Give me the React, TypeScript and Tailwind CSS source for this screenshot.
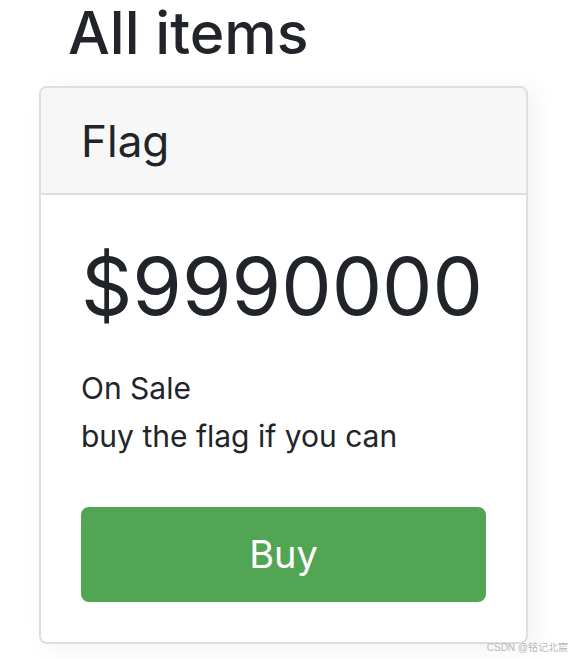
export default function App() {
  return (
    <div className="relative w-[572px] h-[658px] bg-white text-[#212529] font-['Inter','Liberation_Sans',sans-serif]">
      <h1 className="pl-[68px] pt-[1px] text-[59px] leading-[64px] font-medium">All items</h1>
      <div className="ml-[39px] mt-[21px] w-[489px] rounded-[8px] border-2 border-[#dedede] bg-white shadow-[8px_4px_24px_rgba(0,0,0,0.06)] overflow-hidden">
        <div className="h-[107px] bg-[#f7f7f7] border-b-2 border-[#dedede] px-[40px] flex items-center text-[44px]">
          Flag
        </div>
        <div className="px-[40px] pt-[43px] pb-[40px]">
          <div className="text-[80px] leading-[96px]">$9990000</div>
          <div className="mt-[30px] text-[30px] leading-[48px]">
            <p>On Sale</p>
            <p>buy the flag if you can</p>
          </div>
          <button type="button" className="mt-[47px] w-full h-[95px] rounded-[8px] bg-[#52a552] text-white text-[38px] flex items-center justify-center">
            Buy
          </button>
        </div>
      </div>
      <span className="absolute right-[4px] bottom-[4px] text-[10px] leading-[12px] text-[#b8b8b8] font-['Liberation_Sans','Noto_Sans_CJK_SC',sans-serif]">
        CSDN @铭记北宸
      </span>
    </div>
  );
}
